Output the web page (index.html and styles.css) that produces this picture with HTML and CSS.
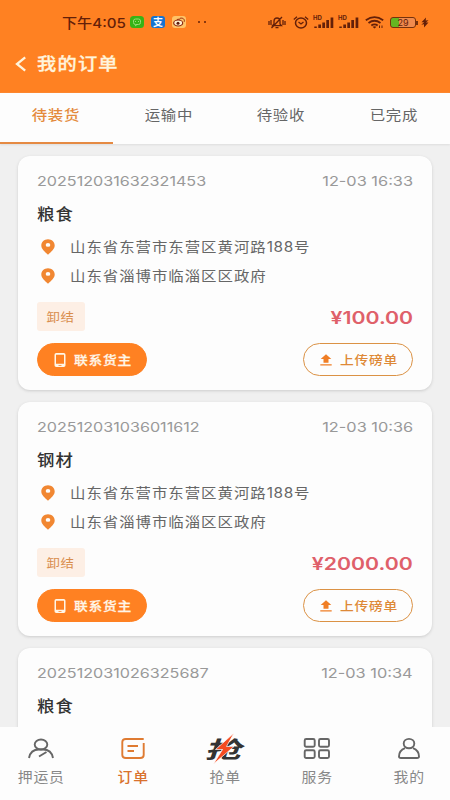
FILE: index.html
```html
<!DOCTYPE html>
<html lang="zh-CN">
<head>
<meta charset="utf-8">
<title>我的订单</title>
<link rel="stylesheet" href="styles.css">
</head>
<body>
<svg class="defs" aria-hidden="true">
  <symbol id="pin" viewBox="0 0 14 16"><path fill-rule="evenodd" d="M7 .3C3.200.3.3 3.100.3 6.500c0 3.400 3.300 6 6.700 9.200 3.400-3.200 6.700-5.800 6.700-9.200C13.700 3.100 10.800.3 7 .3ZM7 4a2.300 1.900 0 1 1 0 3.800a2.300 1.900 0 1 1 0-3.800Z" fill="currentColor"/></symbol>
  <symbol id="phone" viewBox="0 0 12 14"><path fill-rule="evenodd" d="M2.300 0h7.400q1.800 0 1.800 1.700v10.600q0 1.700-1.800 1.700H2.300Q.5 14 .5 12.300V1.700Q.5 0 2.300 0ZM2 1.800v8.900h8V1.800ZM4.500 12v.8h3V12Z" fill="currentColor"/></symbol>
  <symbol id="upload" viewBox="0 0 12 12"><path d="M6 .3 11.300 5H8.500v3.800h-5V5H.7ZM.3 10.200h11.400v1.200H.3Z" fill="currentColor"/></symbol>
  <symbol id="signal" viewBox="0 0 21 13"><path d="M1.300 10.500h2.500V12H1.300ZM5.300 8.500H8V12H5.300ZM9.300 6.500H12V12H9.300ZM13.300 4H16v8h-2.700ZM17.600 1.500h2.700V12h-2.700Z" fill="currentColor"/></symbol>
</svg>
<div class="app">
  <header class="header">
    <div class="status">
      <div class="status-left">
        <span class="clock"><span>下午4:05</span></span>
        <svg class="app-icon" viewBox="0 0 14 12"><rect width="14" height="12" rx="3.500" fill="#37b316"/><rect x="3.500" y="3" width="7" height="5.500" rx="2" fill="none" stroke="#99df77"/><path d="M5 5.500h1m2 0h1M5 10l2-1.500" stroke="#99df77"/></svg>
        <span class="app-icon pay"><span>支</span></span>
        <svg class="app-icon" viewBox="0 0 14 12"><rect width="14" height="12" rx="3" fill="#ffc367"/><ellipse cx="6.200" cy="7" rx="4.500" ry="3" fill="#fff1d2" stroke="#8c2a12" stroke-width="1.200"/><circle cx="6" cy="7.200" r="1.500" fill="#5b190c"/><path d="M8 2.300c3-.8 5 1 4.200 3.500M5 3.500l3-.5" fill="none" stroke="#9b3013"/></svg>
        <span class="dots"><i></i><i></i></span>
      </div>
      <div class="status-right">
        <svg class="bell" viewBox="0 0 18 13"><path d="M4.500 9.700 6 8V5q.2-3 3-3t3 3v3l1.500 1.700ZM7.500 11.700h3M3.500 12 14 1M1 5v4m2-5v5m12-5v5m2-4v4" fill="none" stroke="currentColor" stroke-width="1.300"/></svg>
        <svg class="alarm" viewBox="0 0 16 13"><ellipse cx="8" cy="7" rx="5.500" ry="5" fill="none" stroke="currentColor" stroke-width="1.500"/><path d="m5.500 6 2.500 2 2.500-2M.8 3.500 4 .8m8 0 3.200 2.700" fill="none" stroke="currentColor" stroke-width="1.300"/></svg>
        <span class="sim"><b>HD</b><svg viewBox="0 0 21 13"><use href="#signal"/></svg></span>
        <span class="sim"><b>HD</b><svg viewBox="0 0 21 13"><use href="#signal"/></svg></span>
        <svg class="wifi" viewBox="0 0 19 13"><path d="M.8 4.300q8.700-6.300 17.400 0M3.500 7q6-4.500 12 0M6.300 9.500q3.200-2.400 6.400 0" fill="none" stroke="currentColor" stroke-width="1.800"/><path d="m7.500 10.800 2 1.700 2-1.700q-2-1.300-4 0ZM14 9.500h1V12h-1Zm2.500 0h1V12h-1Z" fill="currentColor"/></svg>
        <span class="battery"><span>29</span></span>
        <svg class="bolt" viewBox="0 0 8 10"><path d="M5 0 .5 4.700h2.700L2 5.800.3 7.200l2.700-.4L3 10l4.500-5H5l2.500-2.200L4.700 3Z" fill="currentColor"/></svg>
      </div>
    </div>
    <div class="titlebar">
      <svg class="back" viewBox="0 0 12 16"><path d="M10.200 1.300 2 8l8.200 6.700" fill="none" stroke="currentColor" stroke-width="2.300"/></svg>
      <h1>我的订单</h1>
    </div>
  </header>

  <nav class="tabs">
    <a class="tab active"><span>待装货</span></a>
    <a class="tab"><span>运输中</span></a>
    <a class="tab"><span>待验收</span></a>
    <a class="tab"><span>已完成</span></a>
  </nav>

  <main class="list">
    <article class="card">
      <div class="meta"><span class="number">202512031632321453</span><time>12-03 16:33</time></div>
      <h2><span>粮食</span></h2>
      <p class="address"><svg><use href="#pin"/></svg><span>山东省东营市东营区黄河路<em>188</em>号</span></p>
      <p class="address"><svg><use href="#pin"/></svg><span>山东省淄博市临淄区区政府</span></p>
      <div class="summary"><span class="tag"><span>卸结</span></span><strong class="price">¥100.00</strong></div>
      <div class="actions">
        <button class="btn solid"><svg class="phone"><use href="#phone"/></svg><span>联系货主</span></button>
        <button class="btn outline"><svg class="upload"><use href="#upload"/></svg><span>上传磅单</span></button>
      </div>
    </article>
    <article class="card">
      <div class="meta"><span class="number">202512031036011612</span><time>12-03 10:36</time></div>
      <h2><span>钢材</span></h2>
      <p class="address"><svg><use href="#pin"/></svg><span>山东省东营市东营区黄河路<em>188</em>号</span></p>
      <p class="address"><svg><use href="#pin"/></svg><span>山东省淄博市临淄区区政府</span></p>
      <div class="summary"><span class="tag"><span>卸结</span></span><strong class="price">¥2000.00</strong></div>
      <div class="actions">
        <button class="btn solid"><svg class="phone"><use href="#phone"/></svg><span>联系货主</span></button>
        <button class="btn outline"><svg class="upload"><use href="#upload"/></svg><span>上传磅单</span></button>
      </div>
    </article>
    <article class="card">
      <div class="meta"><span class="number">202512031026325687</span><time>12-03 10:34</time></div>
      <h2><span>粮食</span></h2>
    </article>
  </main>

  <nav class="bottom">
    <a><svg class="nav-icon" viewBox="0 0 28 24"><ellipse cx="14" cy="7.500" rx="6.300" ry="5"/><path d="M2 21q1.500-8.500 10-8.500h4q8.500 0 10 8.500M12 19.500l7.500-4.500"/></svg><span>押运员</span></a>
    <a class="active"><svg class="nav-icon" viewBox="0 0 28 24"><path d="M24.700 6v12q0 3-3.500 3H6.800q-3.500 0-3.500-3V5q0-3 3.500-3h17.900M8.500 9h10.500M8.500 14h6.500"/></svg><span>订单</span></a>
    <a><span class="grab"><b>抢</b><svg viewBox="0 0 24 31"><path d="M22 0 3.500 16.500h7L1.500 31 22 13.500h-7.500Z" fill="#f44b20" stroke="#fff" stroke-width=".7"/></svg></span><span>抢单</span></a>
    <a><svg class="nav-icon" viewBox="0 0 28 24"><rect x="1.700" y="2" width="10" height="7.700" rx="1.500"/><rect x="16" y="2" width="10" height="7.700" rx="1.500"/><rect x="1.700" y="13.300" width="10" height="7.700" rx="1.500"/><rect x="16" y="13.300" width="10" height="7.700" rx="1.500"/></svg><span>服务</span></a>
    <a><svg class="nav-icon" viewBox="0 0 28 24"><ellipse cx="14" cy="6.600" rx="5.300" ry="4.700"/><path d="M10 11.200Q4 13.500 4 19.500q0 1.500 2 1.500h16q2 0 2-1.500 0-6-6-8.300"/></svg><span>我的</span></a>
  </nav>
</div>
</body>
</html>
```

FILE: styles.css
```css
* { box-sizing: border-box; }
body { margin: 0; font-family: Inter, "Noto Sans CJK SC", sans-serif; }
h1, h2, p { margin: 0; }
svg { display: block; flex: none; }
.defs { position: absolute; width: 0; height: 0; }
.app { width: 450px; height: 800px; display: flex; flex-direction: column; overflow: hidden; background: #f0f0f0; }

.header { height: 93px; flex: none; background: #ff8122; }
.status { height: 43px; padding: 1px 21px 0 62px; display: flex; align-items: center; justify-content: space-between; color: #642009; }
.status-left, .status-right { display: flex; align-items: center; }
.clock { width: 68px; font-size: 13.5px; white-space: nowrap; font-weight: 500; }
.clock span { display: inline-block; transform: scaleX(1.12); transform-origin: left; }
.app-icon { width: 14px; height: 12px; margin-right: 7px; }
.pay { display: flex; align-items: center; justify-content: center; border-radius: 3px; background: #1673d1; color: #fff; font-size: 10px; font-weight: 700; line-height: 12px; }
.dots { display: flex; gap: 4px; margin-left: 5px; }
.dots i { width: 2px; height: 2px; border-radius: 50%; background: currentColor; }
.bell { width: 18px; height: 13px; margin-right: 7px; }
.alarm { width: 16px; height: 13px; margin-right: 4px; }
.sim { position: relative; width: 21px; height: 13px; margin-right: 4px; }
.sim svg { width: 21px; height: 13px; }
.sim b { position: absolute; left: 0; top: -1px; font-size: 6px; line-height: 6px; }
.wifi { width: 19px; height: 13px; margin: 0 6px 0 2px; }
.battery { position: relative; width: 26px; height: 11px; border: 1px solid #76310c; border-radius: 3px; background: linear-gradient(90deg, #65b521 32%, #f08b4e 32%); font-size: 9px; line-height: 9px; text-align: center; }
.battery::after { content: ""; position: absolute; right: -3px; top: 3px; width: 2px; height: 4px; background: #76310c; }
.bolt { width: 8px; height: 11px; margin-left: 5px; }
.titlebar { height: 42px; padding-left: 15px; display: flex; align-items: center; color: #fff4dc; }
.back { width: 12px; height: 16px; margin-right: 10px; }
h1 { font-size: 17px; line-height: 24px; font-weight: 500; letter-spacing: 1.1px; -webkit-text-stroke: .3px currentColor; transform: scaleX(1.13); transform-origin: left; }

.tabs { height: 51px; flex: none; display: grid; grid-template-columns: repeat(4, 1fr); background: #fdfdfd; box-shadow: 0 1px 2px #ddd; z-index: 1; }
.tab { display: flex; justify-content: center; padding-top: 11px; border-bottom: 2px solid transparent; color: #666; font-size: 14px; line-height: 22px; letter-spacing: .6px; }
.tab span { transform: scaleX(1.1); }
.tab.active { color: #e48a3c; border-color: #e58a43; font-weight: 500; }

.list { height: 583px; flex: none; padding: 12px 18px 0; display: flex; flex-direction: column; gap: 12px; overflow: hidden; }
.card { height: 234px; flex: none; padding: 12px 19px 0; border-radius: 12px; background: #fdfdfd; box-shadow: 0 1px 3px #ccc; }
.meta { height: 26px; display: flex; align-items: center; justify-content: space-between; color: #999; font-size: 13.5px; }
.number { transform: scaleX(1.195); transform-origin: left; }
time { transform: scaleX(1.21); transform-origin: right; }
h2 { height: 38px; display: flex; align-items: center; color: #333; font-size: 15.5px; font-weight: 500; letter-spacing: 1px; }
h2 span { transform: translateY(-.5px) scaleX(1.12); transform-origin: left; }
.address { height: 29.5px; display: flex; align-items: center; color: #666; font-size: 14px; letter-spacing: .9px; }
.address svg { width: 14px; height: 16px; margin: 0 15px 0 4px; color: #f18732; }
.address span { white-space: nowrap; transform: translateY(-1px) scaleX(1.1); transform-origin: left; }
.address em { font-style: normal; letter-spacing: .6px; }
.summary { height: 29px; margin-top: 11px; display: flex; align-items: center; justify-content: space-between; }
.tag { width: 48px; height: 29px; display: flex; align-items: center; justify-content: center; border-radius: 3px; background: #fdefe5; color: #d98d4c; font-size: 12px; letter-spacing: .5px; }
.tag span { transform: scaleX(1.12); }
.price { color: #df606a; font-size: 17px; font-weight: 600; transform: translateY(.5px) scaleX(1.25); transform-origin: right; }
.actions { margin-top: 12px; display: flex; justify-content: space-between; }
.btn { width: 110px; height: 33px; padding: 0 0 0 16px; display: flex; align-items: center; border: 1px solid #ff8122; border-radius: 17px; font: 500 12.5px/20px "Noto Sans CJK SC", sans-serif; letter-spacing: .7px; }
.btn span { white-space: nowrap; transform: scaleX(1.1); transform-origin: left; }
.solid { background: #ff8122; color: #fff6e8; -webkit-text-stroke: .25px currentColor; }
.outline { background: #fdfdfd; border-color: #db9245; color: #de8937; }
.phone { width: 12px; height: 14px; margin-right: 8px; }
.upload { width: 12px; height: 12px; margin-right: 8px; color: #f07e25; }

.bottom { height: 73px; flex: none; margin: 0 -5px; display: grid; grid-template-columns: repeat(5, 92px); background: #fdfdfd; }
.bottom a { padding-top: 10px; display: flex; flex-direction: column; align-items: center; color: #888; font-size: 13.5px; line-height: 20px; letter-spacing: .7px; }
.bottom a > span:last-child { margin-top: 6px; transform: scaleX(1.1); }
.bottom .active { color: #d9722d; font-weight: 500; }
.nav-icon { width: 28px; height: 24px; fill: none; stroke: #666; stroke-width: 1.9; }
.active .nav-icon { stroke: #df7b32; }
.grab { position: relative; width: 42px; height: 24px; display: flex; align-items: center; justify-content: center; color: #333; }
.grab b { font-size: 23px; font-weight: 700; letter-spacing: 0; transform: translateY(1px) scaleX(1.6) skewX(-12deg); }
.grab svg { position: absolute; left: 8px; top: -4px; width: 24px; height: 31px; }
```
